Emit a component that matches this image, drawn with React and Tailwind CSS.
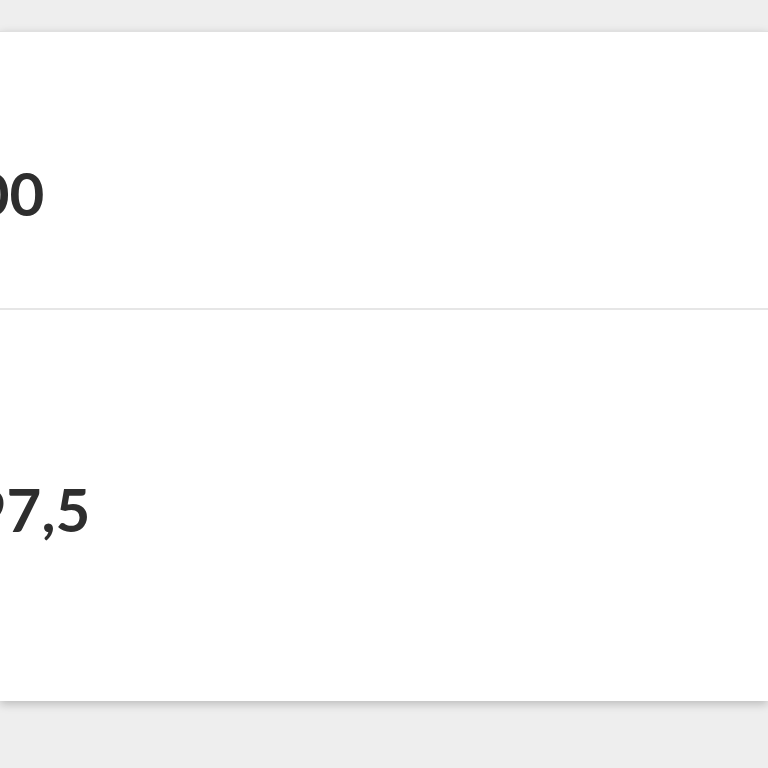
export default function App() {
  const rows = [
    { value: "200", h: "h-[278px]", pt: "pt-[131px]", ml: "-ml-[60px]" },
    { value: "197,5", h: "h-[391px]", pt: "pt-[169px]", ml: "-ml-[63px]" },
  ];

  return (
    <div className="min-h-[768px] w-full bg-[#eeeeee] pt-[31px] overflow-hidden" style={{ fontFamily: "Lato, 'Open Sans', sans-serif" }}>
      <div className="bg-white shadow-[0_3px_9px_rgba(0,0,0,0.22)] border-t border-[#e0e0e0]">
        {rows.map((row, i) => (
          <div
            key={row.value}
            className={`${row.h} ${row.pt} ${i === 0 ? "border-b-2 border-[#e6e6e6]" : ""}`}
          >
            <div className={`${row.ml} text-[60px] leading-[60px] font-bold text-[#2e2e2e] whitespace-nowrap`}>
              {row.value}
            </div>
          </div>
        ))}
      </div>
    </div>
  );
}
